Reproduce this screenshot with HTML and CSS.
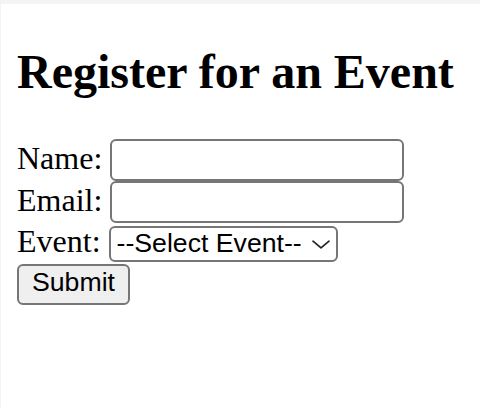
FILE: index.html
```html
<!DOCTYPE html>
<html lang="en">
<head>
<meta charset="utf-8">
<title>Register for an Event</title>
<link rel="stylesheet" href="styles.css">
</head>
<body>
<div class="page">
  <section>
    <h1 class="title">Register for an Event</h1>
    <form class="form">
      <label for="name">Name:</label> <input class="field" type="text" id="name" name="name"><br>
      <label for="email">Email:</label> <input class="field" type="email" id="email" name="email"><br>
      <label for="event">Event:</label> <span class="select-wrap"><select class="select" id="event" name="event">
        <option>--Select Event--</option>
      </select><svg class="chevron" width="18" height="9" viewBox="0 0 18 9"><path d="M1 1.2 L9 7.8 L17 1.2" fill="none" stroke="#222" stroke-width="1.7" stroke-linecap="round" stroke-linejoin="round"/></svg></span><br>
      <button class="submit" type="submit">Submit</button>
    </form>
  </section>
</div>
</body>
</html>
```
FILE: styles.css
```css
html {
  background: #f4f4f4;
}
body {
  margin: 0;
  font-family: "Liberation Serif", "Times New Roman", serif;
  font-size: 32px;
  color: #000;
}
.page {
  display: flow-root;
  margin: 4px 0 0 1px;
  min-height: 404px;
  background: #fff;
  padding: 0 16px;
}
.title {
  font-size: 48px;
  font-weight: bold;
  margin: 40px 0;
}
.form {
  margin: 0;
}
.field {
  box-sizing: border-box;
  width: 294px;
  height: 42px;
  margin: 0;
  padding: 4px 6px;
  font-family: "Liberation Sans", Arial, sans-serif;
  font-size: 26.67px;
  border: 2px solid #767676;
  border-radius: 6px;
  background: #fff;
  vertical-align: baseline;
}
.select-wrap {
  position: relative;
  display: inline-flex;
}
.select {
  -webkit-appearance: none;
  appearance: none;
  box-sizing: border-box;
  width: 229px;
  height: 36px;
  margin: 0;
  padding: 0 24px 4px 6px;
  font-family: "Liberation Sans", Arial, sans-serif;
  font-size: 26.67px;
  color: #000;
  border: 2px solid #767676;
  border-radius: 6px;
  background: #fff;
}
.chevron {
  position: absolute;
  right: 8px;
  top: 14px;
  pointer-events: none;
}
.submit {
  box-sizing: border-box;
  height: 41px;
  width: 113px;
  margin: 0;
  padding: 0 12px 4px;
  font-family: "Liberation Sans", Arial, sans-serif;
  font-size: 26.67px;
  color: #000;
  background: #efefef;
  border: 2px solid #767676;
  border-radius: 6px;
}
```
